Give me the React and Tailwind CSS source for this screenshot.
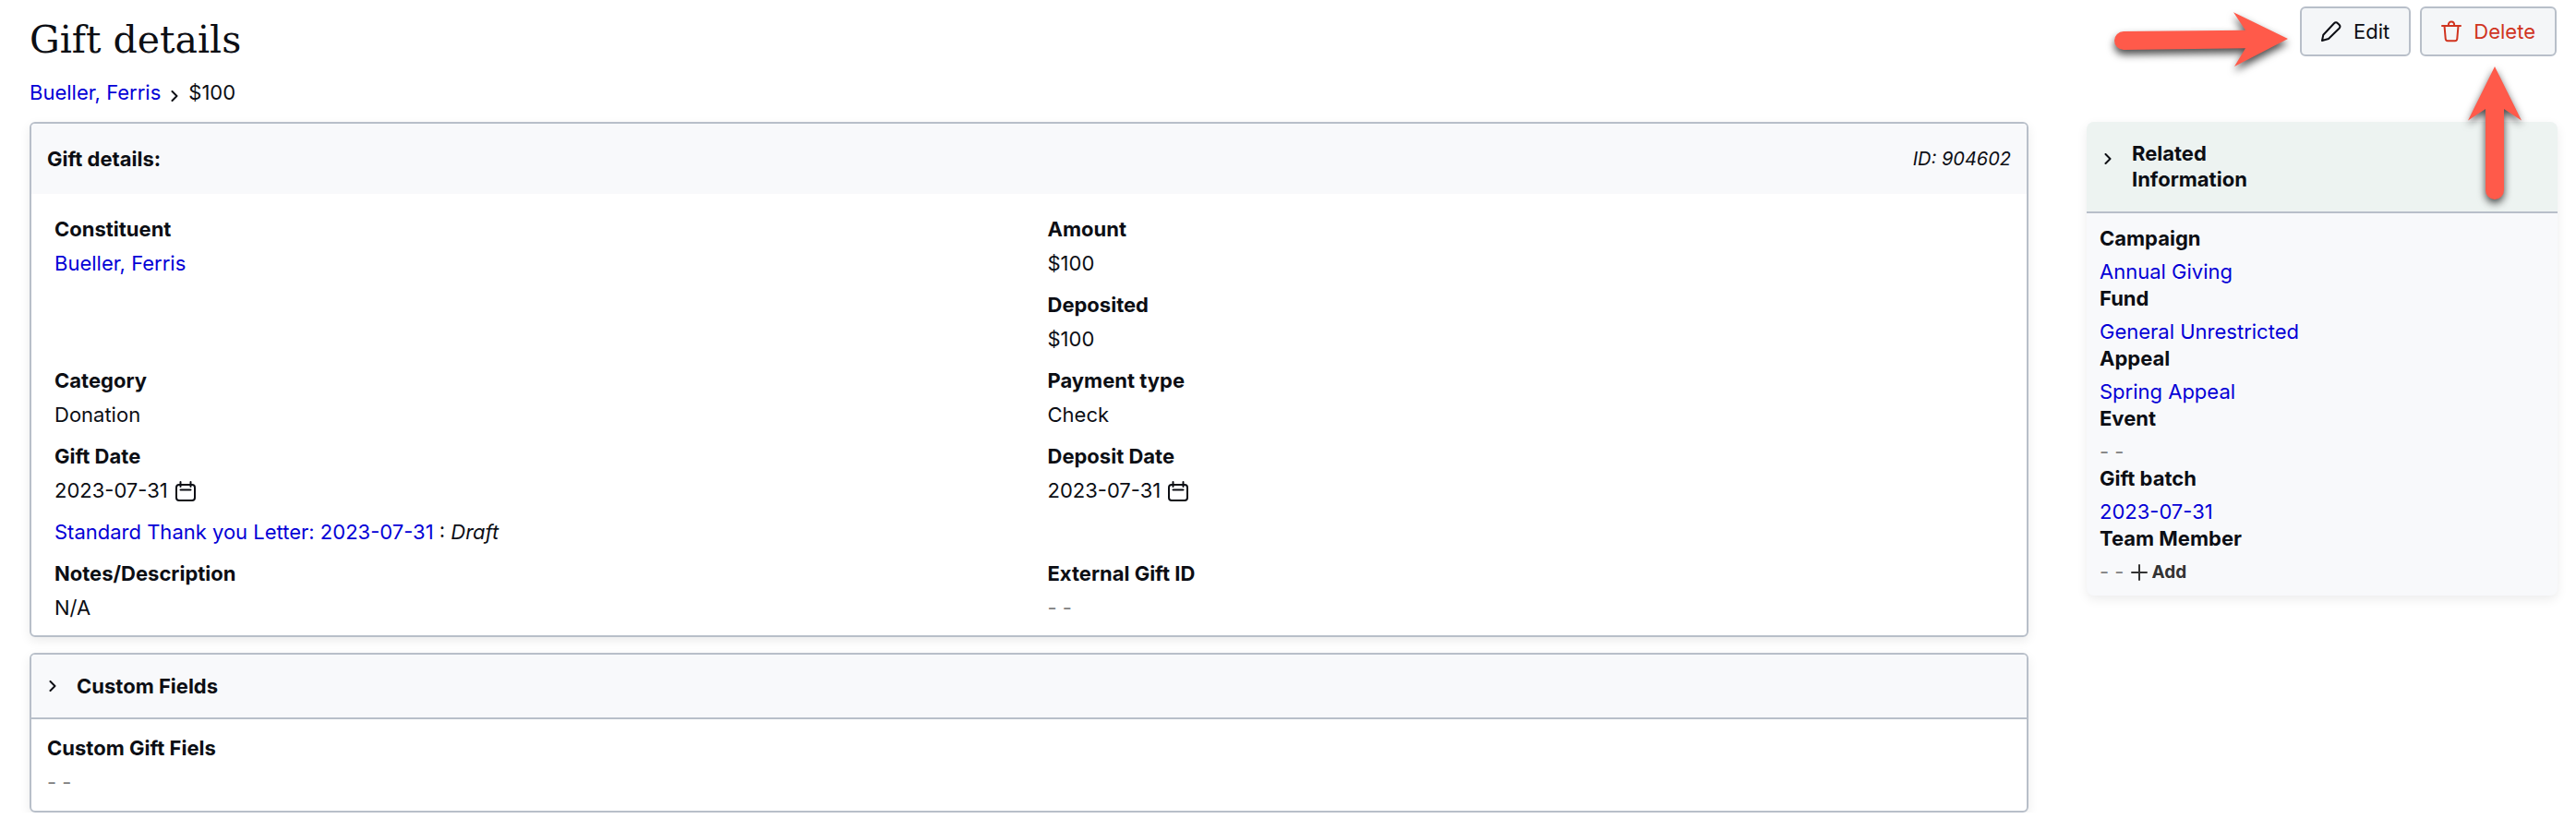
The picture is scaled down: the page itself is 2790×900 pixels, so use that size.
import React from 'react';

const link = 'text-[#0400d6] hover:underline';

function Chevron({ className }) {
  return (
    <svg className={className} width="8" height="12" viewBox="0 0 8 12" fill="none" stroke="currentColor" strokeWidth="2" strokeLinecap="round" strokeLinejoin="round">
      <path d="M1.5 1 6.500 6l-5 5" />
    </svg>
  );
}

function CalendarIcon() {
  return (
    <svg width="22" height="22" viewBox="0 0 22 22" fill="none" stroke="currentColor" strokeWidth="2" strokeLinecap="round">
      <rect x="1" y="4" width="20" height="17" rx="3" />
      <path d="M5.5 1v5M16.5 1v5M5.5 9.5h11" />
    </svg>
  );
}

function PencilIcon() {
  return (
    <svg width="22" height="22" viewBox="0 0 22 22" fill="none" stroke="currentColor" strokeWidth="2" strokeLinecap="round" strokeLinejoin="round">
      <path d="M1 21l1.300-6.200L14 2.300c1.300-1.300 2.700-1.300 3.900-.1l1.600 1.600c1.200 1.200 1.200 2.600 0 3.900L8 19z" />
    </svg>
  );
}

function TrashIcon() {
  return (
    <svg width="22" height="24" viewBox="0 0 22 24" fill="none" stroke="currentColor" strokeWidth="2" strokeLinecap="round" strokeLinejoin="round">
      <path d="M1 6h20M7.800 5.500c0-5.300 6.400-5.300 6.400 0M3.500 6l1.200 13.800c.1 1.600 1 2.500 2.300 2.500h8c1.300 0 2.200-.9 2.300-2.500L18.500 6" />
    </svg>
  );
}

// Annotation arrows pointing at the two action buttons
function Arrows() {
  return (
    <>
      <svg aria-hidden="true" className="pointer-events-none absolute top-0 right-[300px] overflow-visible drop-shadow-[0_5px_4px_rgba(0,0,0,0.7)]" width="210" height="90" viewBox="0 0 210 90" fill="#ff5a4a">
        <path d="M20 34L152 32.700 139 13.300 198 42 140 72 152 52.300 20 54A10 10 0 0 1 20 34z" />
      </svg>
      <svg aria-hidden="true" className="pointer-events-none absolute top-[60px] right-[45px] overflow-visible drop-shadow-[0_4px_4px_rgba(0,0,0,0.7)]" width="85" height="170" viewBox="0 0 85 170" fill="#ff5a4a">
        <path d="M42 12L71 70.500 52 58V146A10 10 0 0 1 32 146V58L13 70.500z" />
      </svg>
    </>
  );
}

function Field({ label, children, className = '' }) {
  return (
    <div className={className}>
      <dt className="font-bold leading-[37px]">{label}</dt>
      <dd className="flex items-center gap-2 leading-[37px]">{children}</dd>
    </div>
  );
}

function Empty() {
  return <span className="text-[#808080]">- -</span>;
}

export default function App() {
  return (
    <div className="relative font-['Inter',sans-serif] text-[22px] leading-7 text-[#0c0e14] pl-8 pr-5 pt-[7px]">
      {/* Title and actions */}
      <header className="flex items-start justify-between">
        <div>
          <h1 className="pt-2 text-[41px] leading-[56px] font-['DejaVu_Serif',serif]">Gift details</h1>
          <nav aria-label="Breadcrumb" className="flex items-center pt-3 pb-[15px] leading-[34px]">
            <a href="#" className={link}>Bueller, Ferris</a>
            <Chevron className="mx-[11px] mt-2" />
            <span>$100</span>
          </nav>
        </div>
        <div className="flex gap-[10px] pr-px">
          <button type="button" className="flex h-[54px] items-center gap-[13px] rounded-md border-2 border-[#b8bfc9] bg-[#f4f6f8] px-[21px]">
            <PencilIcon />
            Edit
          </button>
          <button type="button" className="flex h-[54px] items-center gap-[13px] rounded-md border-2 border-[#b8bfc9] bg-[#f4f6f8] px-[21px] text-[#d0341f]">
            <TrashIcon />
            Delete
          </button>
        </div>
      </header>

      <div className="flex items-start gap-[63px]">
        <main className="flex-1">
          <section className="overflow-hidden rounded-md border-2 border-[#b8bfc9] shadow-[0_4px_12px_rgba(0,0,0,0.08)]">
            <div className="flex h-[76px] items-center justify-between bg-[#f8f9fb] px-[17px]">
              <h2 className="font-bold">Gift details:</h2>
              <span className="text-[20px] italic">ID: 904602</span>
            </div>
            <dl className="grid grid-cols-2 gap-x-10 gap-y-2 px-[25px] pt-5 pb-[11px]">
              <Field label="Constituent">
                <a href="#" className={link}>Bueller, Ferris</a>
              </Field>
              <Field label="Amount">$100</Field>
              <Field label="Deposited" className="col-start-2">$100</Field>
              <Field label="Category">Donation</Field>
              <Field label="Payment type">Check</Field>
              <Field label="Gift Date">2023-07-31 <CalendarIcon /></Field>
              <Field label="Deposit Date">2023-07-31 <CalendarIcon /></Field>
              <div className="col-span-2 leading-[37px]">
                <a href="#" className={link}>Standard Thank you Letter: 2023-07-31</a> : <i>Draft</i>
              </div>
              <Field label="Notes/Description">N/A</Field>
              <Field label="External Gift ID"><Empty /></Field>
            </dl>
          </section>

          <section className="mt-[17px] overflow-hidden rounded-md border-2 border-[#b8bfc9] shadow-[0_4px_12px_rgba(0,0,0,0.08)]">
            <button type="button" className="flex h-[70px] w-full items-center border-b-2 border-[#b8bfc9] bg-[#f8f9fb] px-[19px] font-bold">
              <Chevron className="mr-[22px]" />
              Custom Fields
            </button>
            <dl className="px-[17px] pt-[13px] pb-3">
              <Field label="Custom Gift Fiels"><Empty /></Field>
            </dl>
          </section>
        </main>

        <aside className="w-[510px] overflow-hidden rounded-lg bg-[#f8f9fb] shadow-[0_4px_12px_rgba(0,0,0,0.08)]">
          <button type="button" className="flex w-full items-start border-b-2 border-[#b8bfc9] bg-[#edf3f1] px-[19px] pt-5 pb-[21px] text-left font-bold">
            <Chevron className="mr-[22px] mt-[14px]" />
            <span>Related<br />Information</span>
          </button>
          <dl className="px-[14px] pt-[13px] pb-[11px]">
            {[
              ['Campaign', 'Annual Giving'],
              ['Fund', 'General Unrestricted'],
              ['Appeal', 'Spring Appeal'],
              ['Event', null],
              ['Gift batch', '2023-07-31'],
            ].map(([label, value]) => (
              <div key={label}>
                <dt className="mb-2 font-bold leading-7">{label}</dt>
                <dd className="leading-[29px]">{value ? <a href="#" className={link}>{value}</a> : <Empty />}</dd>
              </div>
            ))}
            <div>
              <dt className="mb-2 font-bold leading-7">Team Member</dt>
              <dd className="flex items-center gap-2 leading-[29px]">
                <Empty />
                <button type="button" className="flex items-center gap-1 text-[19px] font-bold text-[#333]">
                  <svg width="18" height="18" viewBox="0 0 18 18" stroke="currentColor" strokeWidth="2" strokeLinecap="round"><path d="M9 1v16M1 9h16" /></svg>
                  Add
                </button>
              </dd>
            </div>
          </dl>
        </aside>
      </div>

      <Arrows />
    </div>
  );
}
